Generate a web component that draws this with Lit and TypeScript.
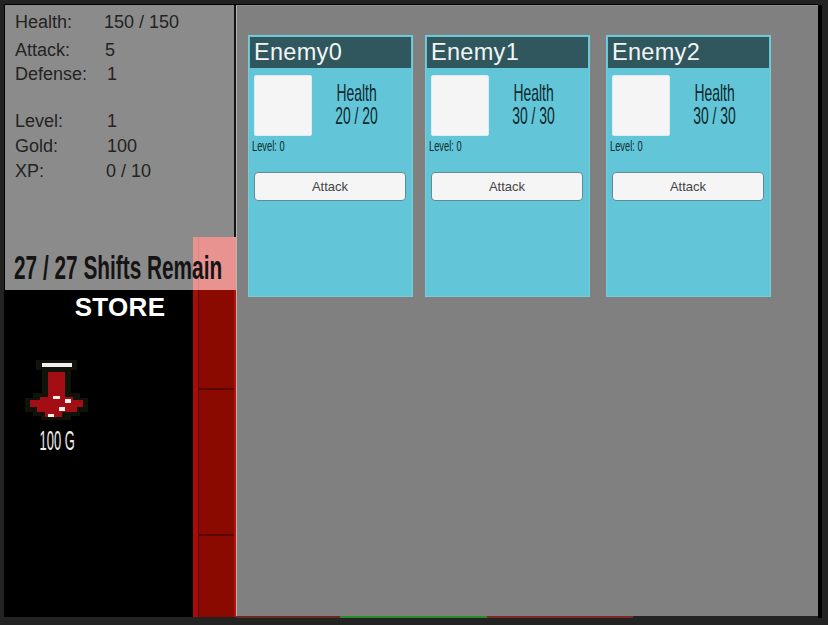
import { LitElement, html, css, svg } from "lit";
import { customElement } from "lit/decorators.js";

const enemies = [
  { name: "Enemy0", hp: "20 / 20", gap: 12 },
  { name: "Enemy1", hp: "30 / 30", gap: 16 },
  { name: "Enemy2", hp: "30 / 30", gap: 0 },
];
/* label, value, gap above the row, value indent */
const stats = [
  ["Health:", "150 / 150", 0, 0],
  ["Attack:", "5", 4, 1],
  ["Defense:", "1", 0, 3],
  ["Level:", "1", 23, 3],
  ["Gold:", "100", 1, 3],
  ["XP:", "0 / 10", 1, 2],
] as const;

@customElement("app-root")
export class AppRoot extends LitElement {
  static styles = css`
    :host { display: block; width: 828px; height: 625px; overflow: hidden; background: #232323;
      font-family: "Liberation Sans", Arial, sans-serif; }
    .frame { display: grid; grid-template-columns: 232px 582px; grid-template-rows: 611px 2px;
      padding: 5px 0 0 4px; height: 625px; box-sizing: border-box; }
    .left { display: flex; flex-direction: column; height: 612px; grid-row: 1 / 3; border-left: 1px solid #000; box-sizing: border-box; box-shadow: 0 -1px 0 #000; }
    .stats { position: relative; height: 285px; flex: none; background: #8b8b8b; border-right: 2px solid #141414; box-sizing: border-box; }
    .rows { display: flex; flex-direction: column; padding: 5px 0 0 10px; font-size: 18px; line-height: 24px; color: #232323; }
    .row { display: grid; grid-template-columns: 89px auto; justify-content: start; }
    .val { white-space: pre; }
    .pink { position: absolute; right: -2px; bottom: 0; width: 43px; height: 53px; background: #e8938f; }
    .pink::before { content: ""; position: absolute; left: 5px; top: 0; bottom: 0; width: 1px; background: #dc8683; }
    .shifts { position: absolute; left: 9px; bottom: 3px; font-size: 34px; font-weight: bold; line-height: 40px; color: #141414;
      white-space: nowrap; transform: scaleX(.612); transform-origin: 0 50%; }
    .store { flex: 1; display: flex; background: #000; min-height: 0; }
    .shop { flex: 1; display: flex; flex-direction: column; color: #fff; }
    .title { text-align: center; font-size: 26px; font-weight: bold; line-height: 32px; margin: 1px 0 0 42px; letter-spacing: .3px; }
    .item { width: 70px; margin: 37px 0 0 18px; display: flex; flex-direction: column; align-items: center; }
    .item svg { display: block; }
    .price { font-size: 28px; line-height: 30px; color: #eee; transform: scaleX(.46); white-space: nowrap; margin: 6px 0 0 -1px; }
    .red { width: 43px; flex: none; display: flex; flex-direction: column; background: #8b0a00;
      border-left: 5px solid #a50d05; border-right: 2px solid #b8100a; box-sizing: border-box; }
    .cell { border-left: 1px solid #5c0500; box-sizing: border-box; }
    .cell + .cell { border-top: 2px solid #5c0500; }
    .c1 { height: 98px; } .c2 { height: 146px; } .c3 { flex: 1; }
    .main { grid-column: 2; grid-row: 1; background: #808080; padding: 29px 0 0 11px; display: flex; align-items: flex-start;
      border-left: 1px solid #b9b4b4; border-top: 1px solid #8f8f8f; box-sizing: border-box; box-shadow: 4px 0 0 #000, 0 -1px 0 #000; }
    .card { flex: none; width: 165px; box-sizing: border-box; height: 262px; background: #62c6d8; border: 1px solid #78ccd6; padding: 1px; }
    .head { height: 31px; background: #2f575d; color: #f2f5f5; font-size: 23.5px; line-height: 31px; padding-left: 4px; letter-spacing: .3px; }
    .body { display: grid; grid-template-columns: 58px 1fr; padding: 7px 4px 0 4px; }
    .pic { height: 61px; background: #f5f5f5; border: 1px solid #d8eef2; border-radius: 2px; box-sizing: border-box; }
    .hp { text-align: center; font-size: 24px; line-height: 23px; color: #10272c; padding: 6px 6px 0 0; }
    .hp div { transform: scaleX(.58); white-space: nowrap; }
    .lvl { grid-column: 1 / 3; font-size: 15px; line-height: 18px; color: #10272c; margin-left: -2px; transform: scaleX(.62); transform-origin: 0 50%; white-space: nowrap; margin-top: 1px; }
    .btn { grid-column: 1 / 3; height: 29px; margin-top: 17px; margin-right: 1px; box-sizing: border-box; background: #f5f5f5; border: 1px solid #5f8b95; border-radius: 4px;
      font: 13px/27px "Liberation Sans", Arial, sans-serif; color: #444; text-align: center; padding: 0; }
    .bars { grid-column: 2; grid-row: 2; display: flex; height: 2px; box-shadow: 4px 0 0 #000; }
    .b1 { width: 104px; background: #6a2a20; } .b2 { width: 147px; background: #2c8a2c; } .b3 { width: 146px; background: #7a2a22; }
  `;

  private potion() {
    const halo = "#0f130a";
    const red = "#a30d14";
    const spot = "#f6f0e8";
    const rects: [number, number, number, number, string][] = [
      [13, 0, 41, 10, halo], [19, 10, 29, 26, halo], [10, 33, 47, 6, halo], [2, 38, 63, 14, halo], [10, 50, 47, 6, halo], [18, 55, 30, 5, halo],
      [19, 3, 30, 4, "#f2f2ee"],
      [25, 12, 17, 25, red], [17, 37, 33, 3, red], [7, 40, 53, 7, red], [14, 47, 40, 5, red], [22, 52, 17, 5, red],
      [30, 36, 7, 3, spot], [42, 39, 6, 4, spot], [36, 47, 6, 4, spot], [25, 54, 6, 3, spot],
    ];
    return html`<svg width="70" height="60" viewBox="0 0 70 60" shape-rendering="crispEdges">
      ${rects.map(([x, y, w, h, c]) => svg`<rect x=${x} y=${y} width=${w} height=${h} fill=${c}></rect>`)}
    </svg>`;
  }

  render() {
    return html`<div class="frame">
      <div class="left">
        <div class="stats">
          <div class="pink"></div>
          <div class="rows">
            ${stats.map(([k, v, top, indent]) => html`<div class="row" style="margin-top:${top}px"><span>${k}</span><span class="val" style="margin-left:${indent}px">${v}</span></div>`)}
          </div>
          <div class="shifts">27 / 27 Shifts Remain</div>
        </div>
        <div class="store">
          <div class="shop">
            <div class="title">STORE</div>
            <div class="item">${this.potion()}<div class="price">100 G</div></div>
          </div>
          <div class="red"><div class="cell c1"></div><div class="cell c2"></div><div class="cell c3"></div></div>
        </div>
      </div>
      <div class="main">
        ${enemies.map((e) => html`<div class="card" style="margin-right:${e.gap}px">
          <div class="head">${e.name}</div>
          <div class="body">
            <div class="pic"></div>
            <div class="hp"><div>Health</div><div>${e.hp}</div></div>
            <div class="lvl">Level: 0</div>
            <button class="btn">Attack</button>
          </div>
        </div>`)}
      </div>
      <div class="bars"><div class="b1"></div><div class="b2"></div><div class="b3"></div></div>
    </div>`;
  }
}
